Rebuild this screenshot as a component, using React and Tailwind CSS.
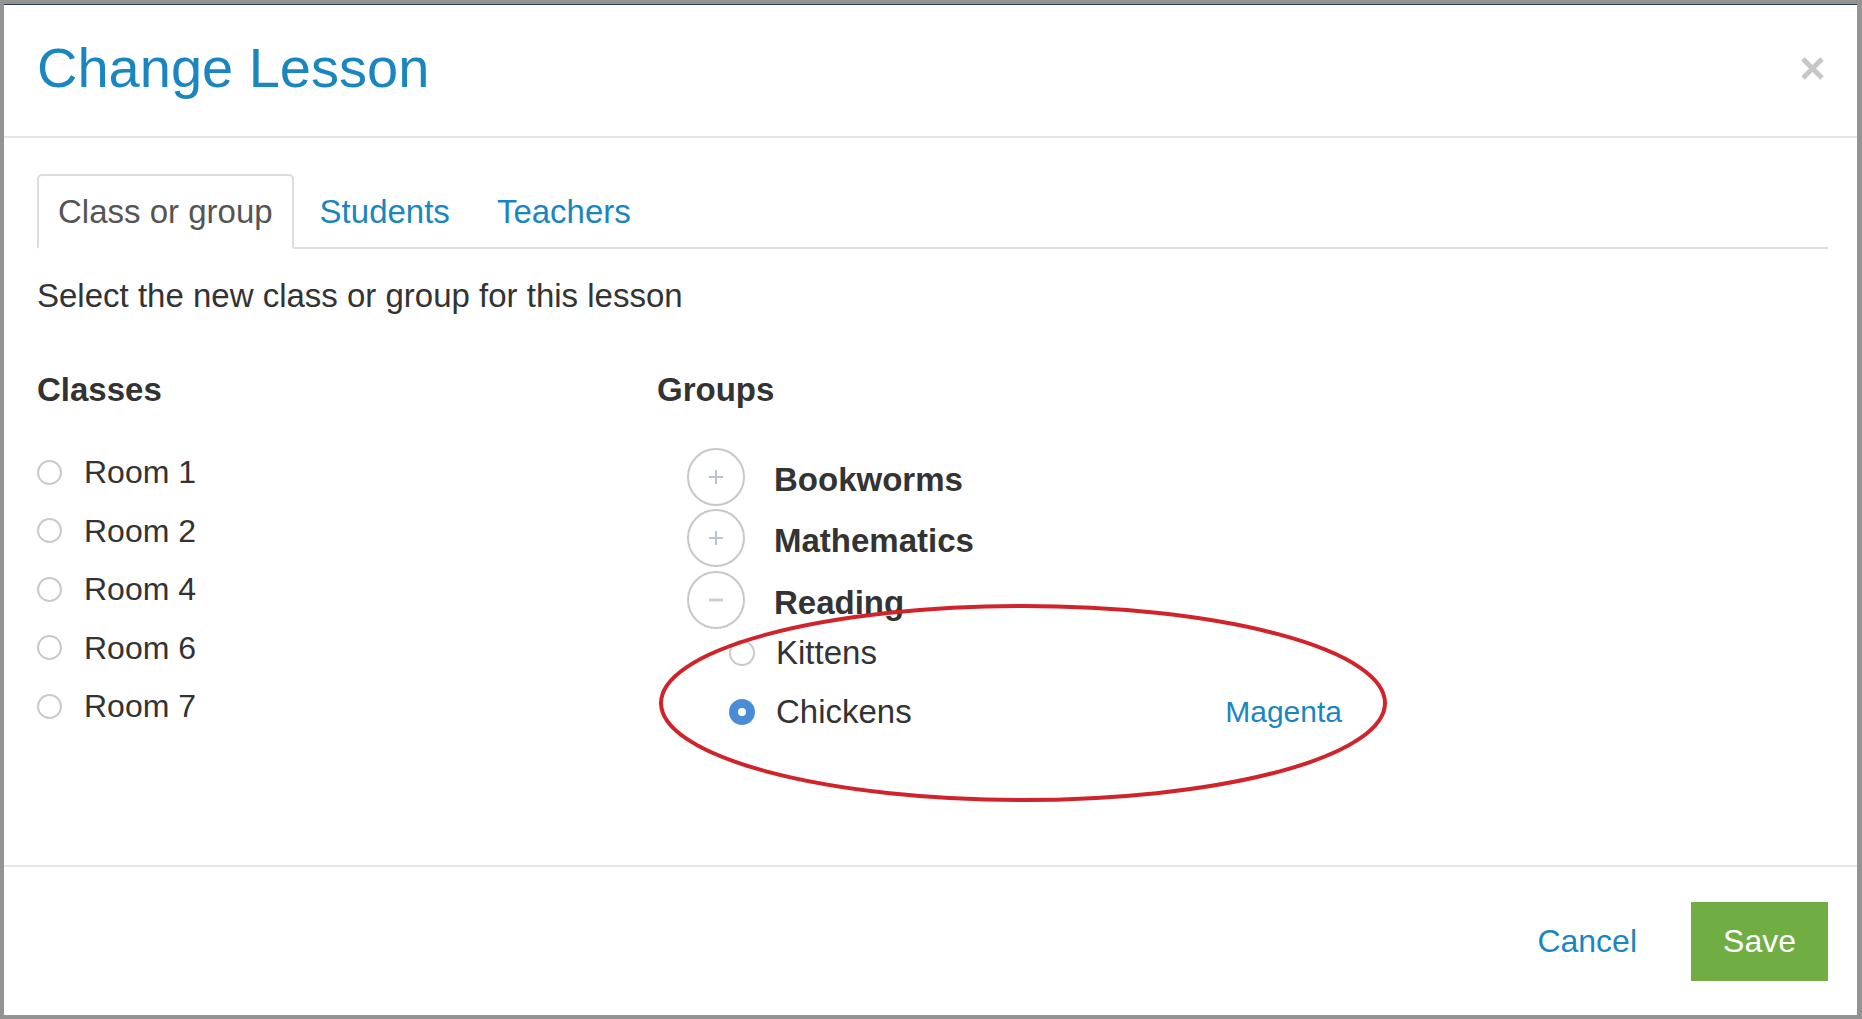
import React from 'react';

const CLASSES = ['Room 1', 'Room 2', 'Room 4', 'Room 6', 'Room 7'];

const GROUPS = [
    { name: 'Bookworms', open: false },
    { name: 'Mathematics', open: false },
    {
        name: 'Reading',
        open: true,
        items: [
            { name: 'Kittens' },
            { name: 'Chickens', checked: true, teacher: 'Magenta' },
        ],
    },
];

const Radio = ({ checked, big }) => {
    if (checked) {
        return (
            <span className="w-[26px] h-[26px] rounded-full bg-[#4a8dd6] flex items-center justify-center shrink-0">
                <span className="w-[8px] h-[8px] rounded-full bg-white"></span>
            </span>
        );
    }
    return (
        <span className={`${big ? 'w-[26px] h-[26px]' : 'w-[25px] h-[25px]'} rounded-full border-2 border-[#c9c9c9] bg-white shrink-0`}></span>
    );
};

const Toggle = ({ open }) => (
    <span className="w-[58px] h-[58px] rounded-full border-2 border-[#c8c8c8] flex items-center justify-center shrink-0">
        <svg width="16" height="16" viewBox="0 0 16 16">
            <line x1="1" y1="8" x2="15" y2="8" stroke={open ? '#cfcfcf' : '#bcc3cf'} strokeWidth={open ? 3 : 2} />
            {!open && <line x1="8" y1="1" x2="8" y2="15" stroke="#bcc3cf" strokeWidth="2" />}
        </svg>
    </span>
);

export default function App() {
    return (
        <div className="relative w-full h-screen bg-[#939393] pt-[4px] pl-[4px] pr-[5px] pb-[4px] flex font-['Liberation_Sans',Arial,sans-serif]">
            <div className="flex-1 flex flex-col bg-white border-t border-[#2e3d4f]">

                {/* header */}
                <div className="flex items-center justify-between pl-[33px] pr-[32px] pt-[31px] pb-[36px] border-b-2 border-[#e5e5e5]">
                    <h1 className="text-[56px] leading-[64px] text-[#1a86bf]">Change Lesson</h1>
                    <svg width="25" height="25" viewBox="0 0 25 25">
                        <line x1="3" y1="3" x2="22" y2="22" stroke="#c6c6c6" strokeWidth="5" />
                        <line x1="22" y1="3" x2="3" y2="22" stroke="#c6c6c6" strokeWidth="5" />
                    </svg>
                </div>

                {/* body */}
                <div className="flex-1 pl-[33px] pr-[29px] pt-[36px]">
                    <ul className="flex border-b-2 border-[#dddddd]">
                        <li className="-mb-[2px] mr-[5px] px-[19px] py-[15px] border-2 border-[#dddddd] border-b-transparent rounded-t-[5px] bg-white text-[33px] leading-[41px] text-[#555555]">
                            Class or group
                        </li>
                        <li className="-mb-[2px] mr-[5px] px-[19px] py-[15px] border-2 border-transparent text-[33px] leading-[41px] text-[#1a86bf]">
                            Students
                        </li>
                        <li className="-mb-[2px] mr-[5px] px-[19px] py-[15px] border-2 border-transparent text-[33px] leading-[41px] text-[#1a86bf]">
                            Teachers
                        </li>
                    </ul>

                    <p className="mt-[27px] text-[33px] leading-[40px] text-[#333333]">
                        Select the new class or group for this lesson
                    </p>

                    <div className="flex mt-[54px]">
                        {/* classes */}
                        <div className="w-[620px] shrink-0">
                            <h3 className="text-[33px] leading-[40px] font-bold text-[#333333]">Classes</h3>
                            <div className="mt-[33px]">
                                {CLASSES.map(c => (
                                    <label key={c} className="h-[58.5px] flex items-center gap-[22px]">
                                        <Radio />
                                        <span className="text-[32px] leading-[36px] text-[#333333]">{c}</span>
                                    </label>
                                ))}
                            </div>
                        </div>

                        {/* groups */}
                        <div className="flex-1">
                            <h3 className="text-[33px] leading-[40px] font-bold text-[#333333]">Groups</h3>
                            <div className="mt-[36px]">
                                {GROUPS.map(g => (
                                    <div key={g.name}>
                                        <div className="h-[61.5px] flex items-center gap-[29px] pl-[30px]">
                                            <Toggle open={g.open} />
                                            <span className="pt-[6px] text-[33px] leading-[36px] font-bold text-[#333333]">{g.name}</span>
                                        </div>
                                        {g.open && (
                                            <div className="-mt-[7px]">
                                                {g.items.map(it => (
                                                    <div key={it.name} className="h-[59px] ml-[72px] w-[613px] flex items-center justify-between">
                                                        <div className="flex items-center gap-[21px]">
                                                            <Radio big checked={it.checked} />
                                                            <span className="text-[33px] leading-[36px] text-[#333333]">{it.name}</span>
                                                        </div>
                                                        {it.teacher && (
                                                            <span className="text-[30px] leading-[36px] text-[#1a86bf]">{it.teacher}</span>
                                                        )}
                                                    </div>
                                                ))}
                                            </div>
                                        )}
                                    </div>
                                ))}
                            </div>
                        </div>
                    </div>
                </div>

                {/* footer */}
                <div className="h-[150px] border-t-2 border-[#e5e5e5] flex items-center justify-end pr-[29px]">
                    <button className="text-[32px] leading-[36px] text-[#1a86bf]">Cancel</button>
                    <button className="ml-[54px] w-[137px] h-[79px] bg-[#70ae44] text-white text-[32px] leading-[36px]">Save</button>
                </div>
            </div>

            {/* annotation */}
            <svg className="absolute inset-0 pointer-events-none" width="1862" height="1019" viewBox="0 0 1862 1019">
                <ellipse cx="1023" cy="703" rx="362" ry="97" fill="none" stroke="#d0232a" strokeWidth="4" />
            </svg>
        </div>
    );
}
